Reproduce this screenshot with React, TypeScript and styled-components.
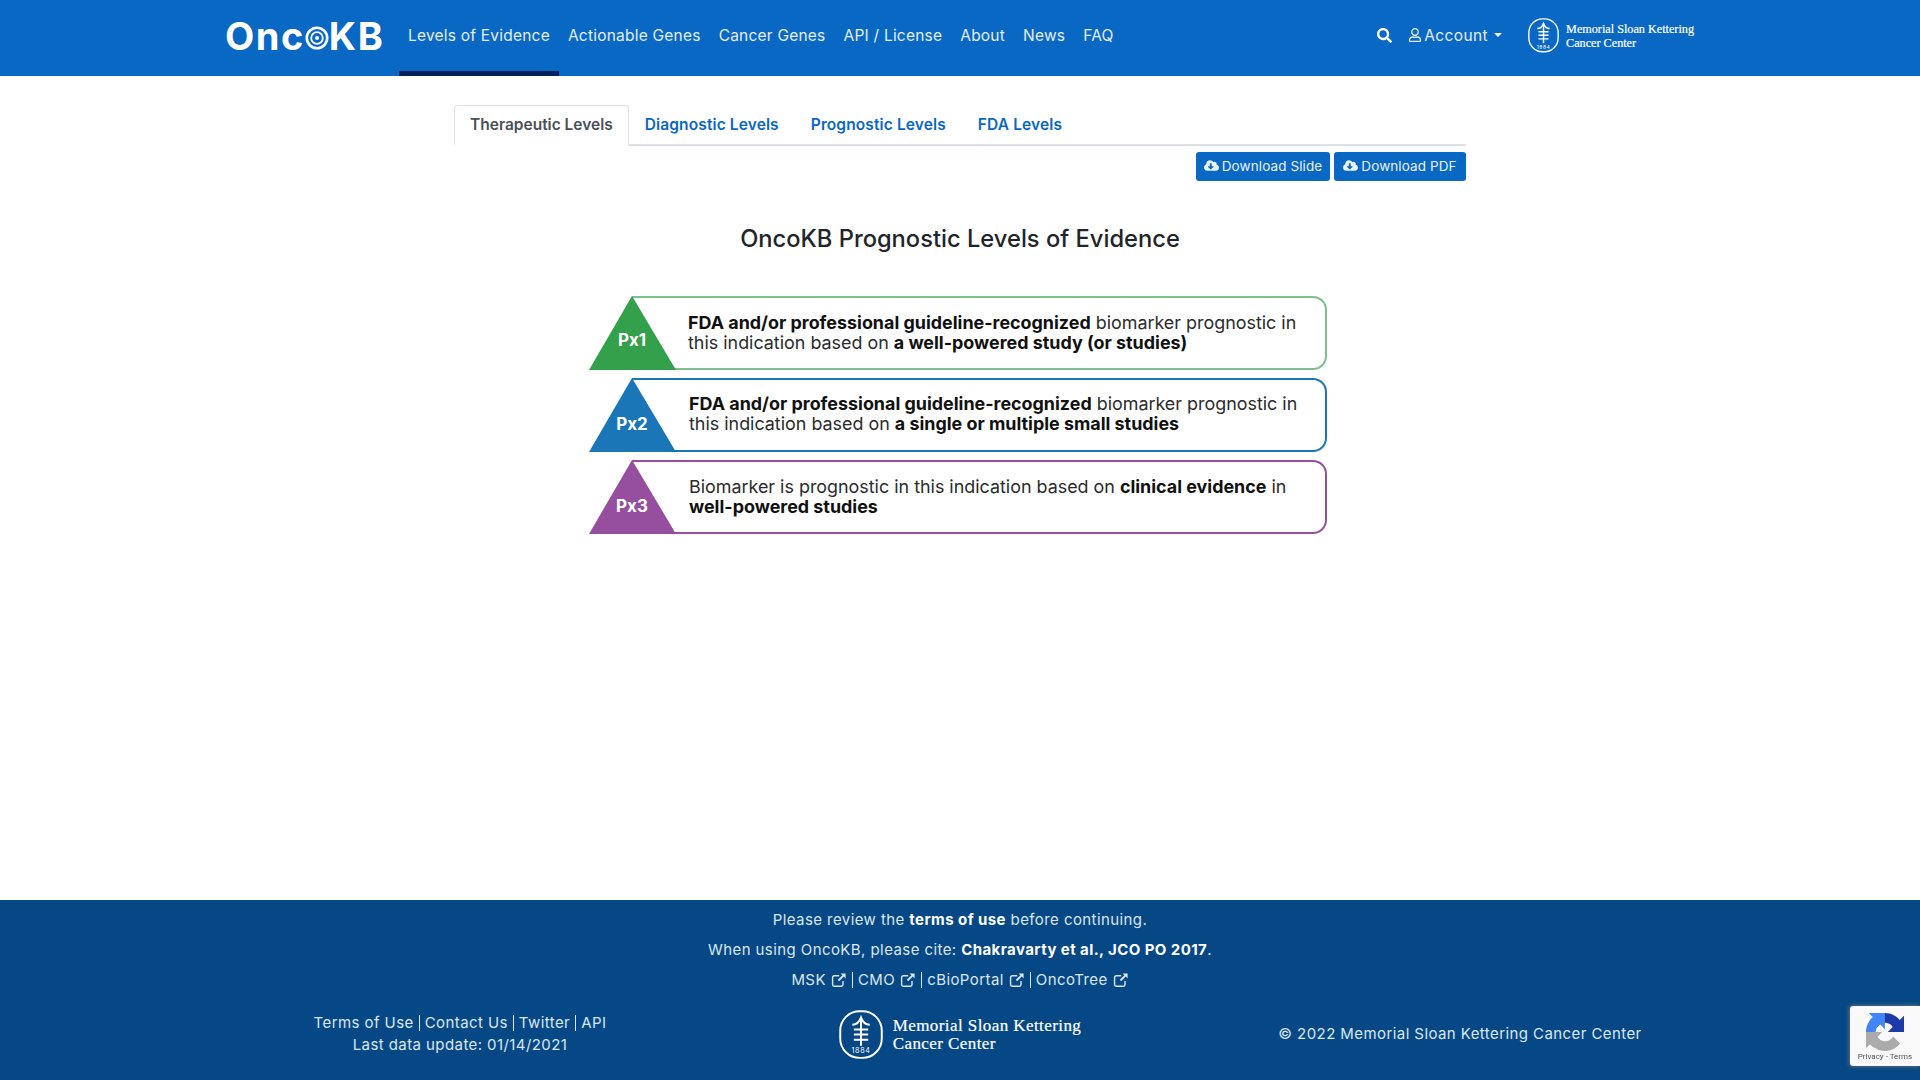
import React from "react";
import styled, { createGlobalStyle } from "styled-components";
import { FaCloudDownloadAlt, FaRegUser, FaSearch } from "react-icons/fa";

const GlobalStyle = createGlobalStyle`
  html, body {
    margin: 0;
    padding: 0;
  }
  body {
    font-family: Inter, "Liberation Sans", sans-serif;
    font-size: 16px;
    color: #212529;
    background: #fff;
  }
`;

const Page = styled.div`
  min-height: 100vh;
  display: flex;
  flex-direction: column;
`;

const NavBar = styled.nav`
  height: 76px;
  background: #0968c3;
  display: flex;
  padding-left: 225px;
  padding-right: 226px;
  color: #fff;
`;

const Brand = styled.div`
  width: 174px;
  height: 71px;
  display: flex;
  align-items: center;
  font-size: 38px;
  font-weight: 700;
  letter-spacing: 1.5px;
  line-height: 1;
`;

const NavList = styled.div`
  display: flex;
  flex: 1;
`;

const NavLink = styled.a<{ $active?: boolean }>`
  box-sizing: border-box;
  height: 76px;
  padding: 25px 9px 0;
  font-size: 15.5px;
  line-height: 21px;
  letter-spacing: 0.22px;
  white-space: nowrap;
  color: #e4eef8;
  border-bottom: 5px solid ${(p) => (p.$active ? "#00205b" : "transparent")};
`;

const NavRight = styled.div`
  display: flex;
  align-items: flex-start;
`;

const SearchButton = styled.span`
  margin-top: 28px;
  font-size: 15px;
  line-height: 15px;
  margin-right: 16px;
`;

const Account = styled.span`
  display: flex;
  align-items: center;
  height: 20px;
  margin-top: 25px;
  margin-right: 26px;
  font-size: 15.5px;
  letter-spacing: 0.4px;
  color: #e4eef8;
  gap: 2px;
`;

const Caret = styled.span`
  margin-left: 4px;
  border-top: 4px solid #fff;
  border-left: 4px solid transparent;
  border-right: 4px solid transparent;
`;

const MskWrap = styled.div<{ $large?: boolean }>`
  display: flex;
  align-items: center;
  gap: ${(p) => (p.$large ? "10px" : "7px")};
  margin-top: ${(p) => (p.$large ? "0" : "18px")};
  color: #fff;
`;

const MskName = styled.div<{ $large?: boolean }>`
  font-family: "Liberation Serif", serif;
  font-size: ${(p) => (p.$large ? "17px" : "12.2px")};
  line-height: ${(p) => (p.$large ? "18px" : "13.5px")};
  padding-top: ${(p) => (p.$large ? "0" : "3px")};
  font-weight: 400;
  -webkit-text-stroke: 0.2px #fff;
  white-space: nowrap;
  text-align: left;
`;

const Main = styled.main`
  flex: 1;
  width: 1012px;
  margin: 0 auto;
  padding-top: 29px;
`;

const Tabs = styled.div`
  display: flex;
  height: 39px;
  border-bottom: 2px solid #dee2e6;
`;

const Tab = styled.a<{ $active?: boolean }>`
  box-sizing: border-box;
  height: 41px;
  padding: 8px 15px;
  font-size: 15.5px;
  line-height: 22px;
  font-weight: 600;
  letter-spacing: ${(p) => (p.$active ? "0" : "0.12px")};
  white-space: nowrap;
  color: ${(p) => (p.$active ? "#495057" : "#0968c3")};
  background: ${(p) => (p.$active ? "#fff" : "transparent")};
  border: 1px solid ${(p) => (p.$active ? "#dee2e6" : "transparent")};
  border-bottom: ${(p) => (p.$active ? "2px solid #fff" : "2px solid transparent")};
  border-radius: 4px 4px 0 0;
`;

const Actions = styled.div`
  display: flex;
  justify-content: flex-end;
  gap: 4px;
  margin-top: 6px;
`;

const DownloadButton = styled.button<{ $width: number }>`
  display: flex;
  align-items: center;
  justify-content: center;
  gap: 3px;
  box-sizing: border-box;
  width: ${(p) => p.$width}px;
  height: 29px;
  padding: 0 0 2px;
  border: none;
  border-radius: 3px;
  background: #0968c3;
  color: #e9f1fa;
  font-family: inherit;
  font-size: 13.5px;
  letter-spacing: 0.1px;
`;

const Heading = styled.h2`
  margin: 44px 0 0;
  text-align: center;
  font-size: 23.7px;
  line-height: 28px;
  font-weight: 500;
  color: #212529;
`;

const Legend = styled.div`
  width: 738px;
  margin: 43px 0 0 135px;
  display: flex;
  flex-direction: column;
  gap: 8px;
`;

const LevelRow = styled.div`
  position: relative;
  height: 74px;
`;

const LevelBox = styled.div<{ $color: string; $indent: number; $top: number }>`
  box-sizing: border-box;
  height: 74px;
  margin-left: 43px;
  padding: ${(p) => p.$top}px 0 0 ${(p) => p.$indent}px;
  border: 2px solid ${(p) => p.$color};
  border-left: none;
  border-radius: 0 14px 14px 0;
  font-size: 17.9px;
  line-height: 20px;
  color: #2b2b2b;
  white-space: nowrap;
  b {
    font-weight: 700;
    color: #111;
  }
`;

const LevelTriangle = styled.svg`
  position: absolute;
  left: 0;
  top: 0;
  width: 87px;
  height: 74px;
`;

const Footer = styled.footer`
  box-sizing: border-box;
  height: 180px;
  background: #064885;
  color: #dbe6f1;
  padding-top: 9px;
  font-size: 15px;
  letter-spacing: 0.42px;
  text-align: center;
`;

const FooterLine = styled.div`
  line-height: 22px;
  margin-bottom: 8px;
  b {
    color: #fff;
    font-weight: 700;
  }
`;

const OutLinks = styled.div`
  display: flex;
  justify-content: center;
  align-items: center;
  height: 21px;
`;

const ExtLink = styled.span`
  display: inline-flex;
  align-items: center;
  gap: 5px;
  svg {
    width: 16px;
    height: 16px;
  }
`;

const Divider = styled.span`
  display: inline-block;
  width: 1px;
  height: 16px;
  margin: 0 5px;
  background: #dbe6f1;
  vertical-align: -3px;
`;

const FooterGrid = styled.div`
  display: grid;
  grid-template-columns: 560px 440px 560px;
  width: 1560px;
  margin: 18px auto 0;
  align-items: center;
`;

const FooterMeta = styled.div`
  line-height: 22px;
`;

const FooterLogo = styled.div`
  display: flex;
  justify-content: center;
  padding-top: 2px;
`;

const RecaptchaBadge = styled.div`
  position: fixed;
  right: 0;
  bottom: 14px;
  box-sizing: border-box;
  width: 70px;
  height: 60px;
  background: #f9f9f9;
  border-radius: 3px 0 0 3px;
  box-shadow: 0 0 5px gray;
  display: flex;
  flex-direction: column;
  align-items: center;
  padding-top: 7px;
  font-family: Roboto, "Liberation Sans", sans-serif;
  font-size: 8px;
  color: #555;
  white-space: nowrap;
  svg {
    width: 38px;
    height: 38px;
    margin-bottom: 1px;
  }
`;

const BrandTarget = () => (
  <svg width="24" height="24" viewBox="0 0 24 24" style={{ marginTop: 4 }}>
    <circle cx="12" cy="12" r="10.2" fill="none" stroke="#fff" strokeWidth="2.6" />
    <circle cx="12" cy="12" r="5.8" fill="none" stroke="#fff" strokeWidth="1.8" />
    <circle cx="12" cy="12" r="2" fill="#fff" />
  </svg>
);

const ExternalIcon = () => (
  <svg viewBox="0 0 16 16">
    <path
      d="M12 9v3.6a1.6 1.6 0 0 1-1.6 1.6H3.2a1.6 1.6 0 0 1-1.6-1.6V5.4a1.6 1.6 0 0 1 1.6-1.6h5"
      fill="none"
      stroke="currentColor"
      strokeWidth="1.4"
    />
    <path d="M9.6 1.4h5v5l-1.8-1.8-4.6 4.6-1.4-1.4 4.6-4.6z" fill="currentColor" />
  </svg>
);

const MskMark: React.FC<{ size: number }> = ({ size }) => (
  <svg width={size} height={(size * 48) / 43} viewBox="0 0 43 48">
    <rect x="1.2" y="1.2" width="40.6" height="45.6" rx="19" fill="none" stroke="#fff" strokeWidth="1.9" />
    <g fill="none" stroke="#fff" strokeWidth="2">
      <path d="M21.5 7v28" />
      <path d="M13 14.5c4 0 7-3 8.5-7 1.5 4 4.5 7 8.5 7" />
      <path d="M14.5 19h14M14.5 24h14M14.5 29h14" />
    </g>
    <text x="21.5" y="42.5" textAnchor="middle" fontSize="7" fill="#fff" fontFamily="Inter, sans-serif" letterSpacing="0.6">
      1884
    </text>
  </svg>
);

const MskLogo: React.FC<{ large?: boolean }> = ({ large }) => (
  <MskWrap $large={large}>
    <MskMark size={large ? 44 : 31} />
    <MskName $large={large}>
      Memorial Sloan Kettering
      <br />
      Cancer Center
    </MskName>
  </MskWrap>
);

const RecaptchaIcon = () => (
  <svg viewBox="0 0 64 64">
    <path
      fill="#1c3aa9"
      d="M64 31.955l-.033-1.37V4.687l-7.16 7.16C50.948 4.674 42.033.093 32.05.093c-10.4 0-19.622 4.96-25.458 12.64l11.736 11.86a15.55 15.55 0 0 1 4.754-5.334c2.05-1.6 4.952-2.906 8.968-2.906.485 0 .86.057 1.135.163 4.976.393 9.288 3.14 11.828 7.124l-8.307 8.307L64 31.953"
    />
    <path
      fill="#4285f4"
      d="M31.862.094l-1.37.033H4.594l7.16 7.16C4.58 13.147 0 22.06 0 32.046c0 10.4 4.96 19.622 12.64 25.458L24.5 45.768a15.55 15.55 0 0 1-5.334-4.754c-1.6-2.05-2.906-4.952-2.906-8.968 0-.485.057-.86.163-1.135.393-4.976 3.14-9.288 7.124-11.828l8.307 8.307L31.86.095"
    />
    <path
      fill="#ababab"
      d="M.001 32.045l.033 1.37v25.898l7.16-7.16C13.054 59.326 21.968 63.907 31.953 63.907c10.4 0 19.622-4.96 25.458-12.64L45.677 39.407a15.55 15.55 0 0 1-4.754 5.334c-2.05 1.6-4.952 2.906-8.968 2.906-.485 0-.86-.057-1.135-.163-4.976-.393-9.288-3.14-11.828-7.124l8.307-8.307L0 32.045"
    />
  </svg>
);

const levels = [
  {
    name: "Px1",
    color: "#33a04c",
    border: "#7cc08d",
    indent: 56,
    top: 15,
    labelY: 50,
    body: (
      <>
        <b>FDA and/or professional guideline-recognized</b> biomarker prognostic in
        <br />
        this indication based on <b>a well-powered study (or studies)</b>
      </>
    ),
  },
  {
    name: "Px2",
    color: "#1a76b6",
    border: "#1a76b6",
    indent: 57,
    top: 14,
    labelY: 52,
    body: (
      <>
        <b>FDA and/or professional guideline-recognized</b> biomarker prognostic in
        <br />
        this indication based on <b>a single or multiple small studies</b>
      </>
    ),
  },
  {
    name: "Px3",
    color: "#964f9f",
    border: "#964f9f",
    indent: 57,
    top: 15,
    labelY: 52,
    body: (
      <>
        Biomarker is prognostic in this indication based on <b>clinical evidence</b> in
        <br />
        <b>well-powered studies</b>
      </>
    ),
  },
];

const navItems = ["Actionable Genes", "Cancer Genes", "API / License", "About", "News", "FAQ"];
const outLinks = ["MSK", "CMO", "cBioPortal", "OncoTree"];

export default function App() {
  return (
    <Page>
      <GlobalStyle />
      <NavBar>
        <Brand>
          Onc
          <BrandTarget />
          KB
        </Brand>
        <NavList>
          <NavLink $active>Levels of Evidence</NavLink>
          {navItems.map((item) => (
            <NavLink key={item}>{item}</NavLink>
          ))}
        </NavList>
        <NavRight>
          <SearchButton>
            <FaSearch />
          </SearchButton>
          <Account>
            <FaRegUser size={14} />
            Account
            <Caret />
          </Account>
          <MskLogo />
        </NavRight>
      </NavBar>

      <Main>
        <Tabs>
          <Tab $active>Therapeutic Levels</Tab>
          <Tab>Diagnostic Levels</Tab>
          <Tab>Prognostic Levels</Tab>
          <Tab>FDA Levels</Tab>
        </Tabs>
        <Actions>
          <DownloadButton $width={134}>
            <FaCloudDownloadAlt size={15} />
            Download Slide
          </DownloadButton>
          <DownloadButton $width={132}>
            <FaCloudDownloadAlt size={15} />
            Download PDF
          </DownloadButton>
        </Actions>
        <Heading>OncoKB Prognostic Levels of Evidence</Heading>
        <Legend>
          {levels.map((level) => (
            <LevelRow key={level.name}>
              <LevelBox $color={level.border} $indent={level.indent} $top={level.top}>
                {level.body}
              </LevelBox>
              <LevelTriangle viewBox="0 0 87 74">
                <polygon points="43,0 87,74 0,74" fill={level.color} />
                <text x="43" y={level.labelY} textAnchor="middle" fontSize="17" fontWeight="700" fill="#fff" fontFamily="Inter, sans-serif">
                  {level.name}
                </text>
              </LevelTriangle>
            </LevelRow>
          ))}
        </Legend>
      </Main>

      <Footer>
        <FooterLine>
          Please review the <b>terms of use</b> before continuing.
        </FooterLine>
        <FooterLine>
          When using OncoKB, please cite: <b>Chakravarty et al., JCO PO 2017</b>.
        </FooterLine>
        <OutLinks>
          {outLinks.map((link, i) => (
            <React.Fragment key={link}>
              {i > 0 && <Divider />}
              <ExtLink>
                {link}
                <ExternalIcon />
              </ExtLink>
            </React.Fragment>
          ))}
        </OutLinks>
        <FooterGrid>
          <FooterMeta>
            Terms of Use
            <Divider />
            Contact Us
            <Divider />
            Twitter
            <Divider />
            API
            <br />
            Last data update: 01/14/2021
          </FooterMeta>
          <FooterLogo>
            <MskLogo large />
          </FooterLogo>
          <FooterMeta>© 2022 Memorial Sloan Kettering Cancer Center</FooterMeta>
        </FooterGrid>
      </Footer>

      <RecaptchaBadge>
        <RecaptchaIcon />
        Privacy - Terms
      </RecaptchaBadge>
    </Page>
  );
}
